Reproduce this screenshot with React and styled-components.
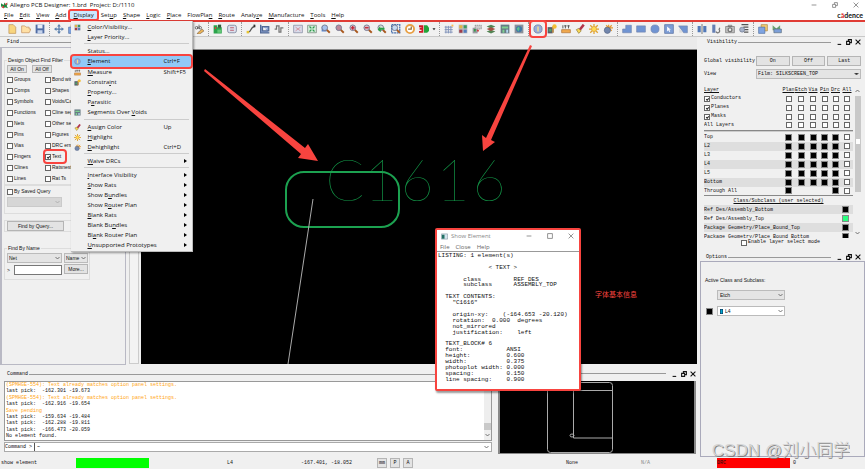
import React from "react";
import styled, { createGlobalStyle } from "styled-components";

const ui = '"Open Sans", "Noto Sans", sans-serif';
const dense = '"Liberation Sans", Arial, sans-serif';
const mono = '"Liberation Mono", "Courier New", monospace';
const red = "#f8443f";

const Global = createGlobalStyle`
  *, *::before, *::after { box-sizing: border-box; }
  body { margin: 0; background: #f0f0f0; color: #111; font-family: ${ui}; font-size: 6px; line-height: 8px; }
  button, input, select { font: inherit; color: inherit; margin: 0; padding: 0; }
  svg { display: block; flex: none; }
`;

const Shell = styled.div`
  position: relative; display: flex; flex-direction: column; min-height: 100vh; overflow: hidden;
`;
const TitleBar = styled.header`
  display: flex; align-items: center; gap: 2px; height: 10px; padding: 0 6px 0 1px; background: #fff; font-size: 6px;
`;
const TitleText = styled.h1`margin: 0; flex: 1; font-size: 6px; font-weight: 400; line-height: 10px; white-space: pre;`;
const WindowButtons = styled.div`display: flex; gap: ${(p) => p.$gap}px;`;
const GlyphButton = styled.button`
  display: flex; align-items: center; justify-content: center; width: 7px; height: 8px; border: 0; background: none;
`;
const MenuBar = styled.nav`
  display: flex; align-items: center; height: 12px; padding-left: 1px; background: #fff; border-bottom: 2px solid #e03c35;
`;
const MenuSlot = styled.div`position: relative; display: flex;`;
const MenuButton = styled.button`
  height: 10px; padding: 0 ${(p) => (p.$open ? 4 : 3)}px; border: 0; line-height: 9px; white-space: nowrap;
  background: ${(p) => (p.$open ? "#cce8ff" : "none")};
  outline: ${(p) => (p.$open ? `2px solid ${red}` : "none")}; outline-offset: -1px; border-radius: 2px;
`;
const Brand = styled.span`margin-left: auto; padding-right: 2px; font: 700 7px/9px Lato, sans-serif; i { color: #d22; font-style: normal; }`;

const DropMenu = styled.div`
  position: absolute; z-index: 20; left: 2px; top: 11px; width: 122px; padding: 1px;
  background: #f0f0f0; border-right: 1px solid #bbb; border-bottom: 1px solid #bbb; box-shadow: 1px 1px 2px #0006;
`;
const DropItem = styled.button`
  display: grid; grid-template-columns: 10px 79px 1fr 5px; align-items: center; column-gap: 0;
  width: 100%; height: ${(p) => (p.$tall ? 11 : 10)}px; border: 0; padding: 0 2px; text-align: left; line-height: 9px; white-space: nowrap;
  background: ${(p) => (p.$active ? "#91c9f7" : "none")}; border-radius: 2px;
  outline: ${(p) => (p.$active ? `2px solid ${red}` : "none")};
  span:nth-child(2) { padding-left: 3px; }
`;
const DropRule = styled.hr`height: 1px; margin: 1px 2px 2px 12px; border: 0; background: #ccc;`;

const ToolBar = styled.div`
  display: flex; align-items: center; height: 15px; padding-left: 5px; background: #f1f1f1; border-bottom: 1px solid #c9c9c9;
`;
const ToolGroup = styled.div`
  display: flex; padding-right: 2px; margin-right: 2px; border-right: 1px dotted #999;
  &:last-child { border: 0; }
`;
const Tool = styled.button`
  position: relative; display: flex; align-items: center; justify-content: center;
  width: ${(p) => (p.$slim ? 6 : 14)}px; height: 14px; padding: 0; border: 0; background: none; border-radius: 2px;
  outline: ${(p) => (p.$marked ? `2px solid ${red}` : "none")}; z-index: ${(p) => (p.$marked ? 5 : 0)};
`;

const Body = styled.div`display: flex; flex: 1;`;
const Left = styled.div`display: flex; flex-direction: column; flex: 1; min-width: 0;`;
const Work = styled.div`display: flex; flex: 1; min-height: 330px;`;
const FindPane = styled.section`width: 126px; display: flex; flex-direction: column; font-family: ${dense};`;
const PaneHead = styled.div`
  display: flex; align-items: center; gap: 1px; height: 10px; padding: 0 ${(p) => p.$right || 0}px 0 7px; font: 5px/10px ${mono};
  &::after { content: ""; order: 1; flex: 1; height: 1px; background: #999; }
  h2 { margin: 0; font-size: 5px; font-weight: 400; }
  > div { order: 2; margin-left: 4px; }
`;
const FindBox = styled.div`
  flex: 1; margin-bottom: 2px; padding: 7px 2px; border: 1px solid #b9b9c4; border-left-width: 2px; font-size: 5px;
`;
const Group = styled.fieldset`
  min-width: 0; margin: 0 0 ${(p) => p.$gap || 0}px; padding: 0 2px ${(p) => p.$bottom || 0}px; border: 1px solid #ddd;
  width: ${(p) => (p.$narrow ? "86px" : "auto")};
  legend { padding: 0 1px; line-height: 10px; }
`;
const ButtonRow = styled.div`display: flex; gap: 5px; margin-bottom: 1px;`;
const Push = styled.button`
  min-width: ${(p) => p.$w || 20}px; height: ${(p) => p.$h || 10}px; line-height: 6px; border: 1px solid #b5b5b5; background: #e3e3e3; white-space: nowrap;
`;
const Checks = styled.div`display: grid; grid-template-columns: 38px 1fr; grid-auto-rows: 11px;`;
const CheckLabel = styled.label`
  position: relative; display: flex; align-items: center; gap: 1px; white-space: nowrap; line-height: 9px; justify-self: start;
  outline: ${(p) => (p.$marked ? `2px solid ${red}` : "none")}; border-radius: 2px;
  padding-right: ${(p) => (p.$marked ? 4 : 0)}px;
`;
const Box = styled.input.attrs({ type: "checkbox" })`
  appearance: none; flex: none; display: grid; place-items: center; width: 6px; height: 6px; border: 1px solid #666; background: #fff;
  &:checked::after { content: ""; width: 3px; height: 2px; border: solid #222; border-width: 0 0 1px 1px; transform: rotate(-45deg); }
`;
const Pick = styled.span`
  display: grid; width: ${(p) => (p.$w ? `${p.$w}px` : "100%")}; height: 10px; align-items: center;
  > * { grid-area: 1 / 1; }
  > svg { justify-self: end; margin-right: 2px; pointer-events: none; }
  select { appearance: none; width: 100%; height: 10px; padding: 0 ${(p) => (p.$dense ? 1 : 2)}px; line-height: 8px;
    border: 1px solid #bbb; border-radius: 0; background: ${(p) => p.$bg || "#e4e4e4"}; }
`;
const NameGrid = styled.div`display: grid; grid-template-columns: 55px 24px; gap: 1px 2px;`;
const NameField = styled.label`
  display: flex; align-items: center; justify-content: space-between; height: 11px;
  input { width: 48px; height: 10px; border: 1px solid #777; background: #fff; }
`;
const SideStrip = styled.div`width: 10px; margin: 3px 2px 3px 3px; border: 1px solid #ccc; background: #f3f3f3;`;
const CanvasCol = styled.div`display: flex; flex-direction: column; flex: 1; min-width: 0; padding-bottom: 3px;`;
const CanvasTop = styled.div`height: 13px; background: #eaeaea; border-bottom: 1px solid #888;`;
const Canvas = styled.div`position: relative; flex: 1; background: #000; > svg { position: absolute; left: 0; top: 0; overflow: visible; z-index: 4; }`;
const RefDes = styled.div`
  position: absolute; left: 186px; top: 101px; display: grid; grid-template-columns: repeat(5, 36px); justify-items: center;
  color: #139a49; font: 100 57px/56px "Lato Hairline", Lato, sans-serif;
`;
const Note = styled.p`position: absolute; left: 454px; top: 239px; margin: 0; color: ${red}; font: 7px/10px "Noto Sans CJK SC", sans-serif;`;

const Dialog = styled.section`
  position: absolute; z-index: 10; left: 294px; top: 178px; width: 146px; height: 163px; border: 2px solid ${red}; border-radius: 2px;
  background: #fff; box-shadow: 1px 2px 2px #0006;
`;
const DialogTitle = styled.div`display: flex; align-items: center; gap: 3px; height: 12px; padding: 0 5px 0 4px; color: #888; span { flex: 1; }`;
const DialogMenu = styled.div`
  display: flex; gap: 6px; height: 10px; padding-left: 3px; color: #666; border-bottom: 1px solid #999;
  button { border: 0; background: none; line-height: 8px; }
`;
const Report = styled.div`
  display: flex; flex-direction: column; justify-content: space-between; height: 129px; margin: 1px 1px 0; font: 6px/5px ${mono};
  div { height: 5px; white-space: pre; }
`;

const Bottom = styled.div`display: flex; height: 90px;`;
const CommandPane = styled.section`flex: 1; padding: 2px 0 0; min-width: 0;`;
const LogBox = styled.div`display: flex; justify-content: space-between; height: 60px; margin: 2px 1px 1px 4px; border: 1px solid #999; background: #fff;`;
const Log = styled.div`
  display: flex; flex-direction: column; justify-content: space-between; height: 58px; padding: 0 1px 1px; font: 5px/6px ${mono}; white-space: pre;
`;
const LogLine = styled.div`color: ${(p) => (p.$warn ? "#ffa514" : "#111")};`;
const LogScroll = styled.div`
  display: flex; flex-direction: column; align-items: center; justify-content: flex-end; width: 7px; background: #eee;
  &::before { content: ""; width: 7px; height: 7px; background: #c9c9c9; }
  svg { margin: 3px 0; }
`;
const CommandLine = styled.label`
  display: flex; align-items: center; height: 10px; margin: 0 1px 0 4px; padding-right: 2px; border: 1px solid #aaa; background: #fff; font: 5px/8px ${mono};
  input { flex: 1; min-width: 0; height: 8px; margin-left: 2px; padding-left: 2px; border: 0; border-left: 1px solid #555; background: #fff; }
`;
const WorldPane = styled.section`width: 204px; padding: 2px 0 3px 5px; display: flex; flex-direction: column;`;
const World = styled.div`
  flex: 1; margin: 3px 1px 0 0; background: #000; border: 1px solid #888; border-width: 0 2px 1px; svg { margin-left: 47px; }
`;

const Right = styled.aside`width: 168px; display: flex; flex-direction: column; font: 5px/8px ${mono};`;
const Visibility = styled.section`padding: 0 4px 0 7px; > ${PaneHead} { padding-left: 3px; }`;
const Controls = styled.div`
  display: grid; grid-template-columns: 50px repeat(3, 1fr); gap: 3px 2px; align-items: center; padding: 9px 0 7px; white-space: nowrap;
  > ${Pick} { grid-column: 2 / -1; }
`;
const ListArea = styled.div`display: flex; gap: 1px; height: 152px; overflow: hidden;`;
const ListBody = styled.div`flex: 1; overflow: hidden;`;
const TableBlock = styled.div`border-bottom: ${(p) => (p.$rule ? "1px solid #ccc" : "0")}; margin-bottom: 1px;`;
const Table = styled.table`
  width: 100%; table-layout: fixed; border-collapse: collapse; border-bottom: 1px solid #888;
  th, td { height: 9px; padding: 0; line-height: 8px; font-weight: 400; text-align: center; vertical-align: middle; white-space: nowrap; }
  th:first-child { text-align: left; }
  thead th { text-decoration: underline; height: 8px; }
  ${CheckLabel} { height: 8px; }
  td ${Box} { margin: 0 auto; }
`;
const Row = styled.tr`background: ${(p) => (p.$shade ? "#dedede" : "transparent")};`;
const Col = styled.col`width: ${(p) => p.$w}px;`;
const Swatch = styled.button`display: block; width: 7px; height: 7px; && { margin: 0 auto; } border: 1px solid #888; background: ${(p) => p.$color || "#000"};`;
const ClassTitle = styled.h3`margin: 0; font-size: 5px; line-height: 8px; font-weight: 400; text-align: center; text-decoration: underline;`;
const ClassRow = styled.div`
  display: flex; align-items: center; justify-content: space-between; height: 9px; padding-right: 4px; white-space: nowrap;
  background: ${(p) => (p.$shade ? "#dedede" : "transparent")};
  ${Swatch} { margin: 0; }
`;
const Scroll = styled.div`
  display: flex; flex-direction: column; align-items: center; justify-content: space-between; width: 7px; padding: 3px 0;
  div { width: 6px; height: 96px; margin-bottom: auto; margin-top: 3px; padding-top: 43px; background: #c8c8c8; }
  i { display: block; width: 4px; height: 5px; margin: 0 auto; background: #fff; }
`;
const Enable = styled.div`display: flex; justify-content: center; height: 9px; padding-right: 4px; margin-bottom: 6px;`;
const Options = styled.section`flex: 1; display: flex; flex-direction: column; padding-left: 3px;
  ${PaneHead} { padding-left: 6px; height: 8px; }`;
const OptionBox = styled.div`flex: 1; padding: 14px 4px; border: 1px solid #aab; font: 5px/8px ${dense};`;
const OptionRow = styled.div`display: grid; grid-template-columns: 8px 68px; gap: 4px; align-items: center; margin-top: 6px;`;
const OptionField = styled.div`
  display: grid; grid-column: 2; align-items: center;
  > * { grid-area: 1 / 1; }
  > svg { margin-left: 3px; z-index: 1; }
  select { padding-left: ${(p) => (p.$chip ? 7 : 2)}px; }
`;

const Status = styled.footer`
  display: grid; grid-template-columns: 75px 149px 75px 75px 188px 76px 76px 1fr; align-items: center; height: 12px; padding-left: 1px;
  background: #f0f0f0; font: 5px/10px ${mono}; white-space: nowrap;
`;
const StatusCell = styled.div`height: 10px; padding-left: ${(p) => p.$pad || 0}px; color: ${(p) => (p.$dim ? "#888" : "#111")}; display: flex; align-items: center; gap: 3px;`;
const Lamp = styled.div`width: 73px; height: 10px; background: ${(p) => p.$color};`;
const Watermark = styled.div`
  position: absolute; z-index: 30; right: 15px; bottom: 6px; font: 300 17px/24px "Liberation Sans", "Noto Sans CJK SC", sans-serif;
  color: #d0d0d0; text-shadow: 1px 1px 0 #777; opacity: 0.85;
`;

const Lens = ({ c, children }) => (
  <g fill="none">
    <path d="M9 9l5 5" stroke="#a8571c" strokeWidth="3" />
    <circle cx="6" cy="6" r="4.5" fill={c} stroke="#777c94" strokeWidth="1.5" />
    {children}
  </g>
);
const blue = "#7094d2";
const art = {
  file: <path d="M3 1h7l4 4v10H3z" fill="#f8d57e" stroke="#b98a4e" />,
  open: <path d="M1 13V3h5l2 2h5v3h3l-3 6H1z" fill="#ffe0a5" stroke="#bf8750" />,
  save: <g><path d="M1 1h14v14H1z" fill="#506da5" /><path d="M4 1h8v6H4z" fill="#e7edf8" /><path d="M4 10h8v5H4z" fill="#c6d4ec" /></g>,
  move: <path d="M8 0l3 4H9v3h3V5l4 3-4 3V9H9v3h2l-3 4-3-4h2V9H4v2L0 8l4-3v2h3V4H5z" fill="#587eac" />,
  abc: <g><path d="M2 6a2 2 0 104 0 2 2 0 10-4 0M6 4v4M8 1v7M8 6a2 2 0 104 0 2 2 0 10-4 0" fill="none" stroke="#333" /><path d="M6 14l7-6 3 3-7 5-4 0z" fill="#eab454" stroke="#7c6252" /></g>,
  chip: <g><path d="M1 2h6v3h7v10H1z" fill="#2ba34b" /><path d="M8 1h5v5H8z" fill="#315d3b" /><path d="M7 9h6v5H7z" fill="#65c877" /><path d="M3 5h2v3H3z" fill="#e33" /></g>,
  pad: <g fill="none" stroke="#8790a5" strokeWidth="1.5"><rect x="1" y="2" width="14" height="12" rx="3" fill="#dce0ed" /><path d="M5 6h6M5 10h6" stroke="#bb5967" /></g>,
  route: <g fill="none"><path d="M3 13c7 0 3-9 11-9" stroke="#555" strokeWidth="2" /><path d="M1 13h4" stroke="#e6c531" strokeWidth="4" /><path d="M12 3h3" stroke="#333" strokeWidth="4" /></g>,
  shape: <g><path d="M1 1v13h14M4 4h10v7H4z" fill="#8ca5d4" stroke="#526996" strokeWidth="2" /><path d="M6 7h5" stroke="#fff" /></g>,
  delay: <path d="M1 8h3V3h4v10h3V6h4" fill="none" stroke="#767676" strokeWidth="2" />,
  grid: <g><path d="M1 2h14v12H1z" fill="#d9dceb" stroke="#747b92" /><path d="M4 5l8 6M12 5l-8 6" stroke="#cd7178" /></g>,
  ggrid: <g><path d="M1 2h14v12H1z" fill="#d4edda" stroke="#65736a" /><path d="M4 4l3 3M12 4L9 7M4 12l3-3M12 12L9 9" stroke="#319b50" strokeWidth="2" /></g>,
  zfit: <g><path d="M1 12V4h8v8z" fill="#5784cc" /><Lens c="#a6c1ec" /></g>,
  zsel: <Lens c="#bd899b" />,
  zin: <Lens c="#e2bdc8"><path d="M3 6h6M6 3v6" stroke="#bd2031" strokeWidth="2" /></Lens>,
  zout: <Lens c="#d9bac6"><path d="M3 6h6" stroke="#bd2031" strokeWidth="2" /></Lens>,
  zprev: <g><Lens c="#d5e4d7" /><path d="M1 9l4-6v3h7v3H6v4z" fill="#2ba047" /></g>,
  zwin: <g><path d="M1 1h13v13H1z" fill="none" stroke="#4871ae" strokeWidth="2" strokeDasharray="3 1" /><Lens c="#c5d9f2" /></g>,
  refresh: <g><circle cx="8" cy="8" r="6.5" fill="#fff" stroke="#e8a045" strokeWidth="3" /><path d="M5 8h5V4" stroke="#8f6c37" strokeWidth="2" fill="none" /></g>,
  three: <g><path d="M0 2h7v12H0v-3h4V9H1V6h3V5H0z" fill="#ce1825" /><path d="M8 2h5l3 4v5l-3 3H8z" fill="#23a53b" /></g>,
  arrow: <path d="M4 6h8l-4 5z" fill="#222" />,
  mesh: <g><path d="M1 5h13M1 9h13M1 13h13M3 3v12M7 3v12M11 3v12" stroke="#7f91b9" strokeWidth="1.5" /><path d="M12 1h3v3h-3z" fill="#ffba4f" /></g>,
  colors: <g><path d="M1 1h14v14H1z" fill="#b9bcc2" /><path d="M2 2h5v5H2z" fill="#e3b643" /><path d="M9 2h5v5H9z" fill="#3d9b60" /><path d="M2 9h5v5H2z" fill="#a13c49" /><path d="M9 9h5v5H9z" fill="#537dbe" /></g>,
  stack: <g><path d="M1 6h8v9H1z" fill="#9a9ba2" /><path d="M5 2h10v6H5z" fill="#ccc" stroke="#777" strokeDasharray="2 1" /><path d="M3 8h3v4H3z" fill="#329b4a" /><path d="M8 9h3v3H8z" fill="#cc3e40" /></g>,
  layers: <g><path d="M1 4l7-3 7 3-7 3zM1 12l7-3 7 3-7 3z" fill="#538454" /><path d="M1 8l7-3 7 3-7 3z" fill="#a54e42" /></g>,
  board: <g><path d="M1 1h14v14H1z" fill="#687b85" /><path d="M3 4h10v3H3zM4 9h3v5H4z" fill="#7ed090" /><path d="M10 9h3v5h-3z" fill="#b5d9f1" /></g>,
  globe: <g><path d="M1 1h14v14H1z" fill="#8b909a" /><circle cx="8" cy="8" r="5" fill="#4278a8" /><path d="M4 7l4-3 1 4-2 4z" fill="#5bc18c" /></g>,
  info: <g><circle cx="8" cy="8" r="6.5" fill="#98acda" stroke="#7c89ac" strokeWidth="1.5" /><path d="M7 4h2v8H7z" fill="#ffe782" /></g>,
  constraint: <g><path d="M1 5h8v10H1z" fill="#595f69" /><path d="M3 8h4v4H3z" fill="#4da46a" /><path d="M8 4h3v10H8z" fill="#b5894e" /><circle cx="12" cy="4" r="3.5" fill="#f3bd35" /></g>,
  ruler: <g><path d="M1 9h14v5H1z" fill="#f0a94e" stroke="#aa6a2e" /><path d="M3 2v5M7 2v5M12 2v5M5 3h4M10 3h4" stroke="#555" strokeWidth="1.5" /></g>,
  brush: <g><path d="M14 1l-7 9" stroke="#b2354b" strokeWidth="4" /><path d="M2 9l4-2 4 4-4 4z" fill="#f5d655" stroke="#86753b" /></g>,
  sun: <g><path d="M8 0v16M0 8h16M2 2l12 12M14 2L2 14" stroke="#dfa12f" strokeWidth="2" /><circle cx="8" cy="8" r="4" fill="#ffdb52" stroke="#d99a37" /></g>,
  dim: <g><path d="M9 1v9M4 6h12M5 2l9 9M14 2l-8 8" stroke="#e49c36" strokeWidth="2" /><circle cx="7" cy="10" r="5" fill="#7286ac" stroke="#526081" /></g>,
  poly: <path d="M6 2h9v12H1V8h5z" fill={blue} stroke="#7184ae" />,
  rect: <path d="M1 3h14v10H1z" fill={blue} stroke="#7184ae" />,
  circle: <circle cx="8" cy="8" r="6.5" fill={blue} stroke="#7184ae" />,
  select: <g><path d="M1 1h14v14H1z" fill="#7e9ed6" stroke="#4b6598" /><path d="M5 4v8l2-2 2 3 1-2-2-2h3z" fill="#fff" /></g>,
  cut: <g><path d="M1 3h14v11H9z" fill={blue} stroke="#7184ae" /><path d="M2 6l6 8H2z" fill="#ddd" /></g>,
  mirror: <g><path d="M1 3h5v10H1zM10 3h5v10h-5z" fill="#5279b8" /><path d="M8 0v16" stroke="#333" /></g>,
  tools: <g><path d="M2 1h5v13H2z" fill="#657fb3" /><path d="M8 12a3 3 0 105-3l1-3" stroke="#777" strokeWidth="2" fill="none" /></g>,
  camera: <g><path d="M1 4h14v10H1zM5 2h6v2H5z" fill="#c0c0c0" stroke="#6b6b6b" /><circle cx="8" cy="9" r="3" fill="#eee" stroke="#777" strokeWidth="2" /></g>,
  check: <g><path d="M4 1h11M7 5h8M7 9h8M8 13h7" stroke="#555" strokeWidth="2" /><circle cx="5" cy="9" r="4" fill="#a6b2ca" stroke="#687288" /></g>,
  copy: <g><path d="M5 1h10v10H5z" fill="#f2ca70" stroke="#a67d39" /><path d="M1 5h10v10H1z" fill="#7fa4e2" stroke="#486a9d" /></g>,
  shapes: <g><path d="M1 2l6 5 6-5v8H1z" fill="#6ba373" /><path d="M3 8h12v6H3z" fill="#7c9fd8" stroke="#567" /></g>,
  app: <g><path d="M0 3l6 4 2-6 3 5 5-3-3 6 3 5-7-2-3 3-1-5-5 1z" fill="#1f8b40" /><path d="M8 5l7-4-3 6zM1 12l6-4-1 6z" fill="#d52525" /></g>,
  page: <g><path d="M1 2h14v12H1z" fill="#d6e6ee" stroke="#678" /><path d="M2 4h6v9H2z" fill="#237064" /></g>,
};
const Icon = ({ n, s = 10 }) => <svg width={s} height={s} viewBox="0 0 16 16" aria-hidden="true">{art[n]}</svg>;
const Chevron = ({ up, solid }) => (
  <svg width="5" height="4" viewBox="0 0 10 8" aria-hidden="true">
    <path d={up ? "M1 6l4-4 4 4" : "M1 2l4 4 4-4"} fill={solid ? "#333" : "none"} stroke="#555" strokeWidth="1.6" />
  </svg>
);
const sign = { min: "M1 5h8", low: "M1 9h6", max: "M1 1h8v8H1z", dock: "M1 4h5v5H1zM4 4V1h5v5H6", close: "M1 1l8 8M9 1L1 9" };
const Sign = ({ n, bold }) => (
  <GlyphButton aria-label={n}>
    <svg width="6" height="6" viewBox="0 0 10 10"><path d={sign[n]} fill="none" stroke={bold ? "#111" : "#777"} strokeWidth={bold ? 1.8 : 1.3} /></svg>
  </GlyphButton>
);
const Accel = ({ children }) => {
  const [a, b] = children.split("&");
  return b ? <>{a}<u>{b[0]}</u>{b.slice(1)}</> : a;
};
const Head = ({ title, docked, right }) => (
  <PaneHead $right={right}><h2>{title}</h2>
    {docked && <WindowButtons $gap={2}><Sign n="low" bold /><Sign n="dock" bold /><Sign n="close" bold /></WindowButtons>}
  </PaneHead>
);
const Dropdown = ({ label, value, w, bg, dense: tight, solid, disabled }) => (
  <Pick $w={w} $bg={bg} $dense={tight}>
    <select aria-label={label} defaultValue={value} disabled={disabled}><option>{value}</option></select><Chevron solid={solid} />
  </Pick>
);

const menus = ["&File", "&Edit", "&View", "&Add", "&Display", "Set&up", "&Shape", "&Logic", "&Place", "FlowPla&n", "&Route", "Analy&ze", "&Manufacture", "&Tools", "&Help"];
const displayItems = [
  ["&Color/Visibility...", "colors"], ["&Layer Priority..."], null, ["&Status..."], ["&Element", "info", "Ctrl+F"], ["&Measure", "ruler", "Shift+F5"],
  ["Constra&int", "constraint"], ["&Property..."], ["P&arasitic"], ["Segments Over &Voids", "board"], null, ["&Assign Color", "brush", "Up"],
  ["&Highlight", "sun"], ["&Dehighlight", "dim", "Ctrl+D"], null, ["&Waive DRCs", "", "", 1], null, ["&Interface Visibility", "", "", 1],
  ["&Show Rats", "", "", 1], ["Show B&undles", "", "", 1], ["Show R&outer Plan", "", "", 1], ["&Blank Rats", "", "", 1], ["Blank Bu&ndles", "", "", 1],
  ["Bl&ank Router Plan", "", "", 1], ["&Unsupported Prototypes", "", "", 1],
];
const toolGroups = [
  ["file", "open", "save"],
  ["move", "copy", "cut", "shapes", "check", "refresh", "select", "pad", "mesh", "board", "abc"],
  ["chip", "pad"], ["route", "shape", "delay"],
  ["grid", "ggrid", "zfit", "zsel", "zin", "zout", "zprev", "zwin", "refresh", "three", "arrow"],
  ["mesh", "colors", "stack", "layers", "board", "globe"],
  ["info", "constraint", "ruler", "brush", "sun", "dim"],
  ["poly", "rect", "circle", "select", "cut"], ["mirror", "tools", "camera", "check"], ["copy", "shapes"],
];
const filters = ["Groups", "Bond wires", "Comps", "Shapes", "Symbols", "Voids/Cavities", "Functions", "Cline segs", "Nets", "Other segs", "Pins", "Figures", "Vias", "DRC errors", "Fingers", "Text", "Clines", "Ratsnests", "Lines", "Rat Ts"];
const report = [
  "LISTING: 1 element(s)", "", "              < TEXT >", "", "       class         REF DES", "       subclass      ASSEMBLY_TOP", "",
  "  TEXT CONTENTS:", '    "C1616"', "", "    origin-xy:    (-164.653 -20.120)", "    rotation:  0.000  degrees", "    not_mirrored",
  "    justification:    left", "", "  TEXT_BLOCK# 6", "  font:            ANSI", "  height:          0.600", "  width:           0.375",
  "  photoplot width: 0.000", "  spacing:         0.150", "  line spacing:    0.900",
];
const warn = "(SPMHGE-554): Text already matches option panel settings.";
const log = [warn, "last pick:  -162.301 -19.673", warn, "last pick:  -162.916 -19.654", "Save pending", "last pick:  -159.634 -19.484", "last pick:  -162.288 -19.811", "last pick:  -166.473 -20.059", "No element found."];
const columns = ["Plan", "Etch", "Via", "Pin", "Drc", "All"];
const widths = [13, 12, 12, 11, 11, 12];
const layers = ["Top", "L2", "L3", "L4", "L5", "Bottom", "Through All"];
const classes = ["Ref Des/Assembly_Bottom", "Ref Des/Assembly_Top", "Package Geometry/Place_Bound_Top", "Package Geometry/Place_Bound_Bottom"];
const Cols = () => <colgroup><col />{widths.map((w, i) => <Col key={i} $w={w} />)}</colgroup>;

export default function App() {
  return (
    <Shell>
      <Global />
      <TitleBar>
        <Icon n="app" s={7} /><TitleText>Allegro PCB Designer: 1.brd  Project: D:/1110</TitleText>
        <WindowButtons $gap={14}><Sign n="min" /><Sign n="dock" /><Sign n="close" /></WindowButtons>
      </TitleBar>
      <MenuBar>
        {menus.map((m) => (
          <MenuSlot key={m}>
            <MenuButton $open={m === "&Display"}><Accel>{m}</Accel></MenuButton>
            {m === "&Display" && (
              <DropMenu role="menu">
                {displayItems.map((it, i) => it ? (
                  <DropItem key={i} role="menuitem" $active={it[0] === "&Element"} $tall={i === 4 || i === 9}>
                    <span>{it[1] && <Icon n={it[1]} s={7} />}</span><span><Accel>{it[0]}</Accel></span><span>{it[2]}</span>
                    <span>{it[3] && <svg width="3" height="4" viewBox="0 0 3 4"><path d="M0 0l3 2-3 2z" /></svg>}</span>
                  </DropItem>
                ) : <DropRule key={i} />)}
              </DropMenu>
            )}
          </MenuSlot>
        ))}
        <Brand>c<i>ā</i>dence</Brand>
      </MenuBar>
      <ToolBar>
        {toolGroups.map((g, i) => (
          <ToolGroup key={i}>
            {g.map((n) => <Tool key={n} aria-label={n} $marked={n === "info"} $slim={n === "arrow"}><Icon n={n} s={n === "arrow" ? 6 : 10} /></Tool>)}
          </ToolGroup>
        ))}
      </ToolBar>
      <Body>
        <Left>
          <Work>
            <FindPane>
              <Head title="Find" />
              <FindBox>
                <Group>
                  <legend>Design Object Find Filter</legend>
                  <ButtonRow><Push $h={8}>All On</Push><Push $h={8}>All Off</Push></ButtonRow>
                  <Checks>
                    {filters.map((f) => <CheckLabel key={f} $marked={f === "Text"}><Box defaultChecked={f === "Text"} />{f}</CheckLabel>)}
                  </Checks>
                </Group>
                <Group $gap={6} $bottom={6}>
                  <Checks><CheckLabel><Box />By Saved Query</CheckLabel></Checks>
                  <Dropdown label="Saved query" value="" w={55} bg="#ccc" disabled />
                </Group>
                <Group as="div" $gap={11}><Push $w={57}>Find by Query...</Push></Group>
                <Group $narrow $bottom={4}>
                  <legend>Find By Name</legend>
                  <NameGrid>
                    <Dropdown label="Object type" value="Net" dense /><Dropdown label="Match by" value="Name" dense />
                    <NameField>&gt;<input aria-label="Name" /></NameField><Push>More...</Push>
                  </NameGrid>
                </Group>
              </FindBox>
            </FindPane>
            <SideStrip />
            <CanvasCol>
              <CanvasTop />
              <Canvas>
                <RefDes aria-label="C1616">{"C1616".split("").map((c, i) => <span key={i}>{c}</span>)}</RefDes>
                <svg width="1" height="1" aria-hidden="true">
                  <rect x="145" y="122" width="113" height="55" rx="18" fill="none" stroke="#1ca150" strokeWidth="2" />
                  <path d="M172 149L147 314" stroke="#aaa" fill="none" />
                  <path d="M64 19L164 98L167 94L177 111L157 108L160 104L63 21z" fill={red} />
                  <path d="M389 -5L391 -4L350 90L354 92L342 101L341 85L345 88z" fill={red} />
                </svg>
                <Note>字体基本信息</Note>
                <Dialog aria-label="Show Element">
                  <DialogTitle><Icon n="page" s={7} /><span>Show Element</span><WindowButtons $gap={14}><Sign n="min" /><Sign n="max" /><Sign n="close" /></WindowButtons></DialogTitle>
                  <DialogMenu><button>File</button><button>Close</button><button>Help</button></DialogMenu>
                  <Report>{report.map((r, i) => <div key={i}>{r}</div>)}</Report>
                </Dialog>
              </Canvas>
            </CanvasCol>
          </Work>
          <Bottom>
            <CommandPane>
              <Head title="Command" />
              <LogBox>
                <Log>{log.map((l, i) => <LogLine key={i} $warn={l[0] === "(" || l[0] === "S"}>{l}</LogLine>)}</Log>
                <LogScroll><Chevron /></LogScroll>
              </LogBox>
              <CommandLine>Command &gt;<input defaultValue="~" /><Chevron /></CommandLine>
            </CommandPane>
            <WorldPane>
              <Head title="" docked right={1} />
              <World>
                <svg width="66" height="72" viewBox="0 0 66 72" fill="none" stroke="#aaa" aria-hidden="true">
                  <rect x="0.5" y="1.5" width="65" height="70" rx="3" /><path d="M0 9.5h65M26.500 9v48h39" /><ellipse cx="25" cy="54.500" rx="2" ry="1.500" />
                </svg>
              </World>
            </WorldPane>
          </Bottom>
        </Left>
        <Right>
          <Visibility>
            <Head title="Visibility" docked />
            <Controls>
              <span>Global visibility</span><Push>On</Push><Push>Off</Push><Push>Last</Push>
              <span>View</span><Dropdown label="View" value="Film: SILKSCREEN_TOP" solid dense />
            </Controls>
            <ListArea>
              <ListBody>
                <TableBlock $rule>
                  <Table><Cols />
                    <thead><tr><th>Layer</th>{columns.map((c) => <th key={c}>{c}</th>)}</tr></thead>
                    <tbody>{["Conductors", "Planes", "Masks", "All Layers"].map((r, i) => (
                      <tr key={r}><th>{i < 3 ? <CheckLabel><Box defaultChecked />{r}</CheckLabel> : r}</th>{columns.map((c) => <td key={c}><Box aria-label={`${r} ${c}`} /></td>)}</tr>
                    ))}</tbody>
                  </Table>
                </TableBlock>
                <TableBlock>
                  <Table><Cols />
                    <tbody>{layers.map((r, i) => (
                      <Row key={r} $shade={i % 2}><th>{r}</th>{columns.map((c, j) => (
                        <td key={c}>{j === 5 ? <Box aria-label={`${r} ${c}`} /> : (i < 6 || j === 0 || j === 4) && <Swatch aria-label={`${r} ${c}`} />}</td>
                      ))}</Row>
                    ))}</tbody>
                  </Table>
                </TableBlock>
                <ClassTitle>Class/Subclass (user selected)</ClassTitle>
                {classes.map((c, i) => <ClassRow key={c} $shade={i % 2 === 0}><span>{c}</span><div><Swatch aria-label={c} $color={i === 1 ? "#2bff80" : "#000"} /></div></ClassRow>)}
              </ListBody>
              <Scroll><Chevron up /><div><i /></div><Chevron /></Scroll>
            </ListArea>
            <Enable><CheckLabel><Box />Enable layer select mode</CheckLabel></Enable>
          </Visibility>
          <Options>
            <Head title="Options" docked right={4} />
            <OptionBox>
              Active Class and Subclass:
              <OptionRow><OptionField><Dropdown label="Active class" value="Etch" /></OptionField></OptionRow>
              <OptionRow>
                <Swatch aria-label="Layer color" />
                <OptionField $chip>
                  <svg width="3" height="5"><path d="M0 0h3v5H0z" fill="#00a9d4" stroke="#124" /></svg>
                  <Dropdown label="Active subclass" value="L4" bg="#fff" />
                </OptionField>
              </OptionRow>
            </OptionBox>
          </Options>
        </Right>
      </Body>
      <Status>
        <StatusCell>show element</StatusCell><Lamp $color="#00ff00" /><StatusCell $pad={2}>L4</StatusCell><StatusCell $pad={1}>-167.401, -18.052</StatusCell>
        <StatusCell $pad={2}><Push $w={10}>mm</Push><Push $w={10}>P</Push><Push $w={10}>A</Push></StatusCell>
        <StatusCell $pad={3}>None</StatusCell><StatusCell $pad={2} $dim>N/A</StatusCell>
        <StatusCell $pad={2}><Lamp $color="#ff0000">DRC</Lamp>0</StatusCell>
      </Status>
      <Watermark>CSDN @刘小同学</Watermark>
    </Shell>
  );
}
